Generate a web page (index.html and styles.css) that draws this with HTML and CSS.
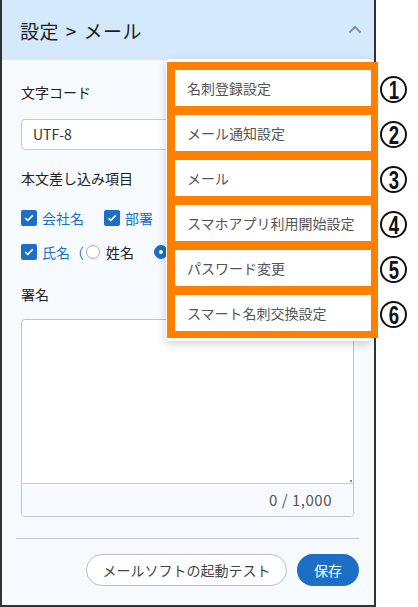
FILE: index.html
```html
<!DOCTYPE html>
<html lang="ja">
<head>
<meta charset="utf-8">
<link rel="stylesheet" href="styles.css">
</head>
<body>
<div class="frame">
  <header class="hdr">
    <span class="title">設定 &gt; メール</span>
    <svg class="chev" width="14" height="9" viewBox="0 0 14 9"><path d="M1.5 7.5 L7 2 L12.5 7.5" fill="none" stroke="#8a8f96" stroke-width="2"/></svg>
  </header>
  <main class="main">
    <div class="label first">文字コード</div>
    <div class="select">UTF-8</div>
    <div class="label gap18">本文差し込み項目</div>
    <div class="row r1">
      <span class="cb"><svg width="10" height="8" viewBox="0 0 10 8"><path d="M1.2 4 L3.8 6.4 L8.8 1.4" fill="none" stroke="#fff" stroke-width="1.6"/></svg></span><span class="blue">会社名</span>
      <span class="cb cb2"><svg width="10" height="8" viewBox="0 0 10 8"><path d="M1.2 4 L3.8 6.4 L8.8 1.4" fill="none" stroke="#fff" stroke-width="1.6"/></svg></span><span class="blue">部署</span>
    </div>
    <div class="row r2">
      <span class="cb"><svg width="10" height="8" viewBox="0 0 10 8"><path d="M1.2 4 L3.8 6.4 L8.8 1.4" fill="none" stroke="#fff" stroke-width="1.6"/></svg></span><span class="blue">氏名（</span>
      <span class="radio"></span><span class="dark">姓名</span>
      <span class="radio on"></span>
    </div>
    <div class="label sig">署名</div>
    <div class="ta">
      <div class="ta-area"></div>
      <div class="ta-foot">0 / 1,000</div>
    </div>
  </main>
  <footer class="foot">
    <div class="foot-in">
      <button class="btn-ghost">メールソフトの起動テスト</button>
      <button class="btn-blue">保存</button>
    </div>
  </footer>
</div>

<div class="menu-panel"></div>
<div class="annot">
  <ul class="menu">
    <li>名刺登録設定</li>
    <li>メール通知設定</li>
    <li>メール</li>
    <li>スマホアプリ利用開始設定</li>
    <li>パスワード変更</li>
    <li>スマート名刺交換設定</li>
  </ul>
  <div class="nums">
    <span class="num"><b>1</b></span>
    <span class="num"><b>2</b></span>
    <span class="num"><b>3</b></span>
    <span class="num"><b>4</b></span>
    <span class="num"><b>5</b></span>
    <span class="num"><b>6</b></span>
  </div>
</div>
</body>
</html>
```

FILE: styles.css
```css
* { box-sizing: border-box; margin: 0; padding: 0; }
html, body { width: 418px; height: 607px; overflow: hidden; }
body {
  background: #fff;
  font-family: "Noto Sans CJK JP", "Noto Sans", sans-serif;
  color: #222;
  position: relative;
}
.frame {
  width: 376px;
  height: 607px;
  border: 2px solid #333;
  border-top: none;
  background: #f7fbff;
  display: flex;
  flex-direction: column;
}
.hdr {
  height: 60px;
  background: #d4e9fb;
  display: flex;
  align-items: center;
  justify-content: space-between;
  padding: 0 12px 0 18px;
}
.title { font-size: 19px; color: #1e1e1e; letter-spacing: 0.5px; word-spacing: 2px; }
.chev { margin-top: -2px; }
.main { padding: 22px 20px 0 19px; }
.label { font-size: 14px; line-height: 20px; color: #222; }
.select {
  margin-top: 17px;
  height: 31px;
  border: 1px solid #c8ccd1;
  border-radius: 4px;
  background: #fff;
  font-size: 14px;
  line-height: 29px;
  padding-left: 11px;
  color: #333;
}
.gap18 { margin-top: 18px; }
.row { display: flex; align-items: center; height: 20px; font-size: 14px; }
.r1 { margin-top: 20px; }
.r2 { margin-top: 14px; }
.cb {
  width: 16px; height: 16px;
  background: #1c6fc4;
  border-radius: 2px;
  display: inline-flex; align-items: center; justify-content: center;
  margin-right: 5px;
  flex: none;
}
.cb2 { margin-left: 20px; }
.blue { color: #1c6fc4; }
.dark { color: #222; }
.radio {
  width: 14px; height: 14px;
  border: 1px solid #a8adb3;
  border-radius: 50%;
  background: #fff;
  margin: 0 6px 0 2px;
  flex: none;
}
.radio.on {
  background: #1c6fc4;
  border-color: #1c6fc4;
  margin-left: 20px;
  position: relative;
}
.radio.on::after {
  content: "";
  position: absolute;
  left: 4px; top: 4px;
  width: 4px; height: 4px;
  border-radius: 50%;
  background: #fff;
}
.sig { margin-top: 22px; }
.ta {
  margin-top: 15px;
  height: 198px;
  border: 1px solid #bfc3c8;
  border-radius: 4px;
  background: #fff;
  display: flex;
  flex-direction: column;
  overflow: hidden;
}
.ta-area { height: 164px; position: relative; }
.ta-area::after {
  content: "";
  position: absolute;
  right: 1px; bottom: 1px;
  width: 2px; height: 2px;
  background: #888;
}
.ta-foot {
  flex: 1;
  border-top: 1px solid #ccd0d5;
  background: #f7fbff;
  text-align: right;
  padding-right: 21px;
  font-size: 15px;
  line-height: 32px;
  color: #555;
  letter-spacing: 0.5px;
}
.foot { padding: 21px 15px 0 14px; }
.foot-in {
  border-top: 1px solid #c4c7cc;
  padding-top: 15px;
  display: flex;
  justify-content: flex-end;
  gap: 10px;
}
button { font-family: inherit; cursor: pointer; }
.btn-ghost {
  height: 32px;
  width: 201px;
  border: 1px solid #bcc0c5;
  border-radius: 16px;
  background: #fff;
  font-size: 14px;
  color: #444;
}
.btn-blue {
  height: 32px;
  width: 62px;
  border: none;
  border-radius: 16px;
  background: #1c6fc4;
  color: #fff;
  font-size: 14px;
}
.menu-panel {
  position: absolute;
  left: 166px; top: 59px;
  width: 205px; height: 282px;
  background: #fff;
  border-radius: 4px;
  box-shadow: 0 3px 10px rgba(0,0,0,0.18);
}
.annot {
  position: absolute;
  left: 167px; top: 62px;
  display: flex;
  gap: 2px;
}
.menu {
  list-style: none;
  width: 211px;
  background: #ff8000;
  padding: 8px 7px 7px 8px;
  display: flex;
  flex-direction: column;
  gap: 9px;
}
.menu li {
  height: 36px;
  background: #fff;
  font-size: 14px;
  line-height: 36px;
  padding-left: 12px;
  color: #555;
}
.nums {
  padding-top: 14px;
  display: flex;
  flex-direction: column;
  gap: 18px;
}
.num {
  width: 27px; height: 27px;
  border: 2px solid #111;
  border-radius: 50%;
  display: flex;
  align-items: center;
  justify-content: center;
  background: #fff;
}
.num b {
  font-family: "Liberation Sans", Arial, sans-serif;
  font-weight: 700;
  font-size: 25px;
  line-height: 1;
  color: #111;
  transform: scaleX(0.74);
  display: block;
  margin-top: 1px;
}
```
